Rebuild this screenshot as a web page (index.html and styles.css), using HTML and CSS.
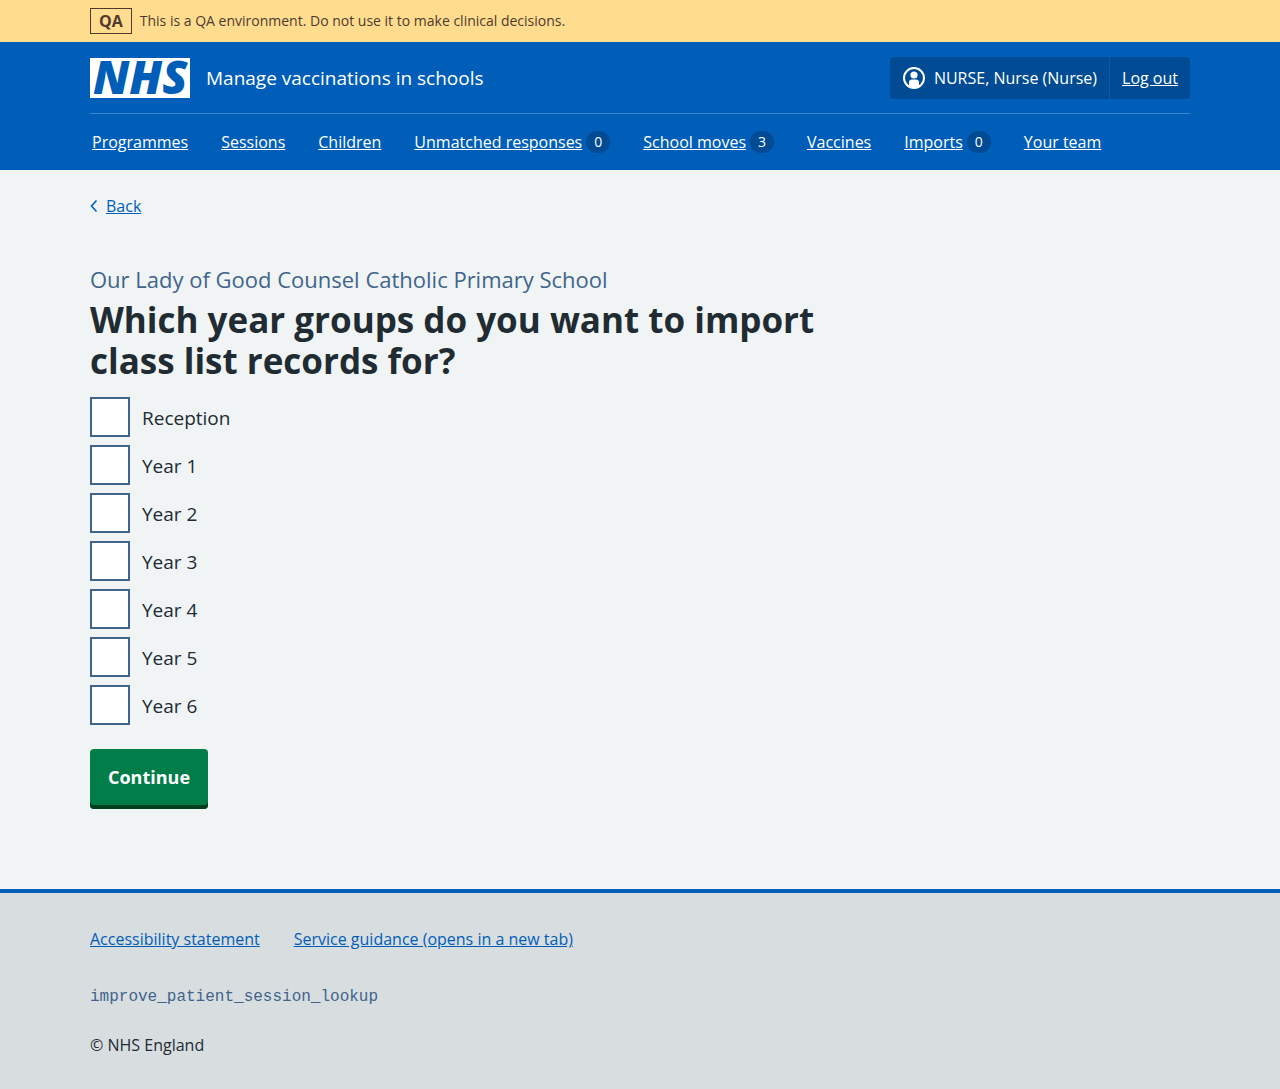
FILE: index.html
```html
<!DOCTYPE html>
<html lang="en">
<head>
<meta charset="utf-8">
<meta name="viewport" content="width=device-width, initial-scale=1">
<title>Which year groups do you want to import class list records for? – Manage vaccinations in schools</title>
<link rel="stylesheet" href="styles.css">
</head>
<body>
<div class="environment">
  <div class="container environment-inner">
    <strong class="tag">QA</strong>
    <span>This is a QA environment. Do not use it to make clinical decisions.</span>
  </div>
</div>
<header class="header">
  <div class="container">
    <div class="header-top">
      <a class="brand" href="#">
        <svg class="logo" viewBox="0 0 100 40" role="img" aria-label="NHS">
          <rect width="100" height="40" fill="#fff"/>
          <text class="logo-text" x="3" y="36">NHS</text>
        </svg>
        <span>Manage vaccinations in schools</span>
      </a>
      <div class="account">
        <span class="account-item">
          <svg class="user-icon" viewBox="0 0 24 24" aria-hidden="true">
            <circle cx="12" cy="12" r="10" fill="none" stroke="#fff" stroke-width="2"/>
            <circle cx="12" cy="9" r="3.6" fill="#fff"/>
            <path d="M7 20v-3.500a3 3 0 0 1 3-3h4a3 3 0 0 1 3 3V20a9.500 9.500 0 0 1-10 0z" fill="#fff"/>
          </svg>
          NURSE, Nurse (Nurse)
        </span>
        <a class="account-item account-link" href="#">Log out</a>
      </div>
    </div>
    <nav class="nav" aria-label="Menu">
      <div class="nav-item"><a href="#">Programmes</a></div>
      <div class="nav-item"><a href="#">Sessions</a></div>
      <div class="nav-item"><a href="#">Children</a></div>
      <div class="nav-item"><a href="#">Unmatched responses</a><span class="count">0</span></div>
      <div class="nav-item"><a href="#">School moves</a><span class="count">3</span></div>
      <div class="nav-item"><a href="#">Vaccines</a></div>
      <div class="nav-item"><a href="#">Imports</a><span class="count">0</span></div>
      <div class="nav-item"><a href="#">Your team</a></div>
    </nav>
  </div>
</header>
<div class="container page">
  <div class="back">
    <svg class="back-icon" viewBox="0 0 8 14" aria-hidden="true"><path d="M6.500 1.500 1.500 7l5 5.500" fill="none" stroke="#005eb8" stroke-width="1.600"/></svg>
    <a href="#">Back</a>
  </div>
  <main class="main">
    <form>
      <fieldset class="fieldset">
        <legend class="legend">
          <span class="caption">Our Lady of Good Counsel Catholic Primary School</span>
          <h1 class="heading">Which year groups do you want to import class list records for?</h1>
        </legend>
        <div class="options">
          <div class="option"><input type="checkbox" id="year-0"><label for="year-0">Reception</label></div>
          <div class="option"><input type="checkbox" id="year-1"><label for="year-1">Year 1</label></div>
          <div class="option"><input type="checkbox" id="year-2"><label for="year-2">Year 2</label></div>
          <div class="option"><input type="checkbox" id="year-3"><label for="year-3">Year 3</label></div>
          <div class="option"><input type="checkbox" id="year-4"><label for="year-4">Year 4</label></div>
          <div class="option"><input type="checkbox" id="year-5"><label for="year-5">Year 5</label></div>
          <div class="option"><input type="checkbox" id="year-6"><label for="year-6">Year 6</label></div>
        </div>
      </fieldset>
      <button class="button" type="submit">Continue</button>
    </form>
  </main>
</div>
<footer class="footer">
  <div class="container">
    <div class="footer-links">
      <a href="#">Accessibility statement</a>
      <a href="#">Service guidance (opens in a new tab)</a>
    </div>
    <code class="branch">improve_patient_session_lookup</code>
    <p class="copyright">© NHS England</p>
  </div>
</footer>
</body>
</html>
```
FILE: styles.css
```css
* { box-sizing: border-box; }

body {
  margin: 0;
  min-height: 100vh;
  display: flex;
  flex-direction: column;
  background: #f0f4f5;
  color: #212b32;
  font: 16px/24px "Open Sans", "Noto Sans", sans-serif;
}

a { color: #005eb8; }

.container {
  width: calc(100% - 64px);
  max-width: 1100px;
  margin: 0 auto;
}

.environment {
  background: #ffdc8e;
  color: #4d3b2e;
  font-size: 14px;
  font-weight: 500;
  padding: 8px 0;
}
.environment-inner { display: flex; align-items: center; gap: 8px; }
.tag {
  border: 1px solid #4d3b2e;
  padding: 0 8px;
  font-size: 16px;
}

.header { background: #005eb8; color: #fff; }
.header a { color: #fff; }
.header-top {
  display: flex;
  flex-wrap: wrap;
  align-items: center;
  justify-content: space-between;
  gap: 16px;
  padding: 15px 0 14px;
  border-bottom: 1px solid #3d84c8;
}
.header .brand {
  display: flex;
  align-items: center;
  gap: 16px;
  font-size: 19px;
  font-weight: 500;
  text-decoration: none;
}
.logo { width: 100px; height: 40px; flex: none; overflow: visible; }
.logo-text {
  fill: #005eb8;
  font-family: "Open Sans", sans-serif;
  font-size: 46px;
  font-weight: 800;
  font-style: italic;
}
.account { display: flex; background: #004b93; border-radius: 4px; }
.account-item { display: flex; align-items: center; gap: 8px; padding: 9px 12px; }
.account-link { border-left: 1px solid #005eb8; }
.user-icon { width: 24px; height: 24px; }

.nav { display: flex; flex-wrap: wrap; gap: 0 33px; padding: 16px 2px; }
.nav-item { display: flex; align-items: center; gap: 4px; }
.count {
  min-width: 24px;
  padding: 0 8px;
  border-radius: 12px;
  background: #004b93;
  font-size: 14px;
  font-weight: 500;
  line-height: 22px;
  text-align: center;
}

.page { flex: 1; padding: 24px 0 80px; }
.back { display: flex; align-items: center; gap: 8px; }
.back-icon { width: 8px; height: 14px; }
.main { padding-top: 45px; }
.fieldset { border: 0; margin: 0; padding: 0; }
.legend { max-width: 733px; padding: 0; margin-bottom: 16px; }
.caption { display: block; margin-bottom: 4px; color: #41648b; font-size: 22px; line-height: 32px; }
.heading { margin: 0; font-size: 35px; line-height: 41px; }
.options { display: flex; flex-direction: column; gap: 8px; }
.option { display: flex; align-items: center; gap: 12px; font-size: 19px; font-weight: 500; }
.option label { padding-top: 2px; }
.option input {
  appearance: none;
  width: 40px;
  height: 40px;
  margin: 0;
  border: 2px solid #41648b;
  background: #fff;
}
.option input:checked { background: #41648b; box-shadow: inset 0 0 0 6px #fff; }
.button {
  margin-top: 24px;
  padding: 14px 18px 18px;
  border: 0;
  border-radius: 4px;
  background: #007d48;
  box-shadow: inset 0 -4px 0 #00401e;
  color: #fff;
  font: bold 18px/28px "Open Sans", "Noto Sans", sans-serif;
}

.footer {
  border-top: 4px solid #005eb8;
  background: #d8dde0;
  padding: 34px 0 32px;
}
.footer-links { display: flex; flex-wrap: wrap; gap: 8px 34px; }
.branch {
  display: block;
  margin: 34px 0 24px;
  color: #41648b;
  font: 16px/24px "Liberation Mono", monospace;
}
.copyright { margin: 0; }
```
